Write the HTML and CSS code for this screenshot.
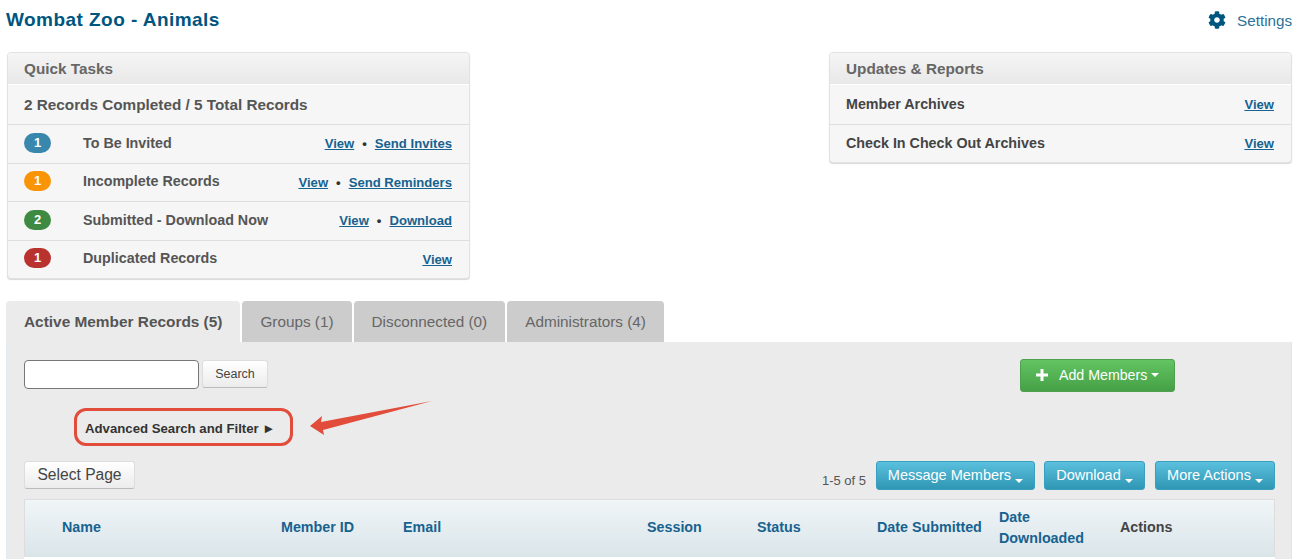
FILE: index.html
```html
<!DOCTYPE html>
<html lang="en">
  <head>
    <title>Wombat Zoo - Animals</title>
    <link rel="stylesheet" href="styles.css">
  </head>
  <body>
    <div class="page-top">
      <h1 class="title">Wombat Zoo - Animals</h1>
      <a class="settings" href="#">
        <svg class="gear" viewBox="0 0 512 512"><path d="M487.4 315.7l-42.6-24.6c4.3-23.2 4.3-47 0-70.2l42.6-24.6c4.9-2.8 7.1-8.6 5.5-14-11.1-35.6-30-67.8-54.7-94.6-3.8-4.1-10-5.1-14.8-2.3L380.8 110c-17.9-15.4-38.5-27.3-60.8-35.1V25.8c0-5.6-3.9-10.5-9.4-11.7-36.7-8.2-74.3-7.8-109.2 0-5.5 1.2-9.4 6.1-9.4 11.7V75c-22.2 7.9-42.8 19.8-60.8 35.1L88.7 85.5c-4.9-2.8-11-1.9-14.8 2.3-24.7 26.7-43.6 58.9-54.7 94.6-1.7 5.4.6 11.2 5.5 14L67.3 221c-4.3 23.2-4.3 47 0 70.2l-42.6 24.6c-4.9 2.8-7.1 8.6-5.5 14 11.1 35.6 30 67.8 54.7 94.6 3.8 4.1 10 5.1 14.8 2.3l42.6-24.6c17.9 15.4 38.5 27.3 60.8 35.1v49.2c0 5.6 3.9 10.5 9.4 11.7 36.7 8.2 74.3 7.8 109.2 0 5.5-1.2 9.4-6.1 9.4-11.7v-49.2c22.2-7.9 42.8-19.8 60.8-35.1l42.6 24.6c4.9 2.8 11 1.9 14.8-2.3 24.7-26.7 43.6-58.9 54.7-94.6 1.5-5.5-.7-11.3-5.6-14.1zM256 336c-44.1 0-80-35.9-80-80s35.9-80 80-80 80 35.9 80 80-35.9 80-80 80z"/></svg>
        Settings
      </a>
    </div>

    <div class="panels">
      <section class="panel">
        <h2 class="panel-head">Quick Tasks</h2>
        <div class="row row-summary">2 Records Completed / 5 Total Records</div>
        <div class="row">
          <span class="badge badge-blue">1</span>
          <span class="row-label">To Be Invited</span>
          <span class="row-links"><a href="#">View</a><i>•</i><a href="#">Send Invites</a></span>
        </div>
        <div class="row">
          <span class="badge badge-orange">1</span>
          <span class="row-label">Incomplete Records</span>
          <span class="row-links"><a href="#">View</a><i>•</i><a href="#">Send Reminders</a></span>
        </div>
        <div class="row">
          <span class="badge badge-green">2</span>
          <span class="row-label">Submitted - Download Now</span>
          <span class="row-links"><a href="#">View</a><i>•</i><a href="#">Download</a></span>
        </div>
        <div class="row">
          <span class="badge badge-red">1</span>
          <span class="row-label">Duplicated Records</span>
          <span class="row-links"><a href="#">View</a></span>
        </div>
      </section>

      <section class="panel">
        <h2 class="panel-head">Updates &amp; Reports</h2>
        <div class="row row-strong">
          <span class="row-label">Member Archives</span>
          <span class="row-links"><a href="#">View</a></span>
        </div>
        <div class="row row-strong">
          <span class="row-label">Check In Check Out Archives</span>
          <span class="row-links"><a href="#">View</a></span>
        </div>
      </section>
    </div>

    <div class="tabs">
      <a class="tab tab-active" href="#">Active Member Records (5)</a>
      <a class="tab" href="#">Groups (1)</a>
      <a class="tab" href="#">Disconnected (0)</a>
      <a class="tab" href="#">Administrators (4)</a>
    </div>

    <div class="tab-body">
      <div class="search-row">
        <input class="search-input" type="text">
        <button class="btn btn-small">Search</button>
        <button class="btn-add">
          <svg class="plus" viewBox="0 0 12 12"><path d="M4.5 0h3v4.500h4.500v3h-4.500v4.500h-3v-4.500h-4.500v-3h4.500z"/></svg>
          Add Members <b class="caret"></b>
        </button>
      </div>

      <div class="advanced-row">
        <a class="advanced" href="#">Advanced Search and Filter ►</a>
        <svg class="arrow" width="130" height="40" viewBox="0 0 130 40"><path d="M3 26L15 16L14 22L125 1L16 30L17 35z"/></svg>
      </div>

      <div class="action-row">
        <button class="btn btn-select">Select Page</button>
        <span class="pager">1-5 of 5</span>
        <button class="btn-blue btn-message">Message Members <b class="caret"></b></button>
        <button class="btn-blue btn-download">Download <b class="caret"></b></button>
        <button class="btn-blue btn-more">More Actions <b class="caret"></b></button>
      </div>

      <div class="table-head">
        <span>Name</span>
        <span>Member ID</span>
        <span>Email</span>
        <span>Session</span>
        <span>Status</span>
        <span>Date Submitted</span>
        <span>Date<br>Downloaded</span>
        <span class="col-actions">Actions</span>
      </div>
      <div class="table-rows"></div>
    </div>
  </body>
</html>
```

FILE: styles.css
```css
* {
  box-sizing: border-box;
}
html,
body {
  height: 559px;
  overflow: hidden;
}
body {
  margin: 0;
  background: #fff;
  font-family: "Liberation Sans", Arial, sans-serif;
  font-size: 14.3px;
  color: #444;
}
a {
  color: #17628f;
}

.page-top {
  display: flex;
  justify-content: space-between;
  align-items: center;
  height: 40px;
  padding: 0 6px;
}
.title {
  margin: 0;
  font-size: 19px;
  font-weight: bold;
  letter-spacing: 0.45px;
  color: #00557f;
}
.settings {
  display: flex;
  align-items: center;
  gap: 11px;
  font-size: 15.2px;
  color: #2b7199;
  text-decoration: none;
}
.gear {
  width: 18px;
  height: 18px;
  fill: #00557f;
}

.panels {
  display: flex;
  justify-content: space-between;
  align-items: flex-start;
  margin-top: 12px;
  padding: 0 6px 0 7px;
  height: 227px;
}
.panel {
  width: 463px;
  background: #f6f6f6;
  border: 1px solid #e2e2e2;
  border-radius: 4px;
  box-shadow: 0 1px 1px #d8d8d8;
  overflow: hidden;
}
.panel-head {
  display: flex;
  align-items: center;
  height: 32px;
  margin: 0;
  padding-left: 16px;
  background: linear-gradient(#f5f5f5, #e8e8e8);
  border-bottom: 1px solid #fff;
  font-size: 15.3px;
  font-weight: bold;
  color: #666;
}
.row {
  display: flex;
  align-items: center;
  height: 38.500px;
  padding: 0 17px 0 16px;
  border-top: 1px solid #dedede;
  font-weight: bold;
  color: #555;
}
.panel-head + .row {
  border-top: 0;
}
.row-summary {
  height: 39px;
  font-size: 15.3px;
}
.row-strong {
  color: #444;
}
.badge {
  flex: none;
  width: 27px;
  height: 20px;
  margin-right: 32px;
  margin-bottom: 2px;
  border-radius: 10px;
  font-size: 13px;
  line-height: 20px;
  text-align: center;
  color: #fff;
}
.badge + .row-label {
  margin-bottom: 2px;
}
.badge-blue {
  background: #3a87ad;
}
.badge-orange {
  background: #f89406;
}
.badge-green {
  background: #3f8a43;
}
.badge-red {
  background: #b9322e;
}
.row-label {
  font-weight: bold;
}
.row-links {
  margin-left: auto;
  font-size: 13.1px;
  white-space: nowrap;
}
.row-links i {
  margin: 0 8px;
  font-style: normal;
  color: #333;
}

.tabs {
  display: flex;
  gap: 2px;
  height: 41px;
  margin-top: 22px;
  padding-left: 6px;
}
.tab {
  display: flex;
  align-items: center;
  padding: 0 18px;
  background: #ccc;
  border-radius: 4px 4px 0 0;
  font-size: 15.3px;
  color: #666;
  text-decoration: none;
}
.tab-active {
  background: #ebebeb;
  font-size: 15.4px;
  font-weight: bold;
  color: #555;
}

.tab-body {
  height: 217px;
  margin: 0 6px;
  padding: 17px 16px 0 17px;
  background: #ebebeb;
  border-left: 1px solid #e0ecf2;
  border-right: 1px solid #dbe8ee;
}
.search-row {
  display: flex;
  align-items: flex-start;
  height: 33px;
}
.search-input {
  width: 175px;
  height: 29px;
  margin: 1px 3px 0 0;
  background: #fff;
  border: 1px solid #777;
  border-radius: 4px;
}
.btn {
  background: linear-gradient(#fff, #ececec);
  border: 1px solid #ddd;
  border-bottom-color: #bbb;
  border-radius: 3px;
  font-family: inherit;
  color: #444;
}
.btn-small {
  width: 66px;
  height: 28px;
  margin-top: 1px;
  font-size: 12.500px;
}
.btn-add {
  display: flex;
  align-items: center;
  width: 155px;
  height: 33px;
  margin-left: auto;
  margin-right: 100px;
  padding: 0 0 2px 15px;
  background: linear-gradient(#62c462, #46a046);
  border: 1px solid #4f9f4f;
  border-radius: 3px;
  font-family: inherit;
  font-size: 14.200px;
  color: #fff;
}
.plus {
  width: 12px;
  height: 12px;
  margin-right: 11px;
  fill: #fff;
}
.caret {
  display: inline-block;
  margin-left: 4px;
  border-top: 4px solid #fff;
  border-left: 4px solid transparent;
  border-right: 4px solid transparent;
  vertical-align: middle;
}

.advanced-row {
  position: relative;
  height: 69px;
  padding: 16px 0 0 50px;
}
.advanced {
  display: flex;
  align-items: center;
  width: 219px;
  height: 38px;
  padding: 2px 0 0 8px;
  border: 3px solid #e14d3a;
  border-radius: 12px;
  font-size: 13.200px;
  font-weight: bold;
  color: #333;
  text-decoration: none;
}
.arrow {
  position: absolute;
  left: 283px;
  top: 8px;
  fill: #e14d3a;
}

.action-row {
  display: flex;
  align-items: flex-start;
  height: 38px;
}
.btn-select {
  width: 111px;
  height: 28px;
  font-size: 15.6px;
}
.pager {
  margin: 12px 10px 0 auto;
  font-size: 13px;
  color: #555;
}
.btn-blue {
  height: 29px;
  padding: 0 0 2px;
  background: linear-gradient(#5bc0de, #2f96b4);
  border: 1px solid #3a9fbf;
  border-radius: 3px;
  font-family: inherit;
  font-size: 14.500px;
  color: #fff;
}
.btn-blue .caret {
  margin-left: 0;
  vertical-align: -3px;
}
.btn-message {
  width: 159px;
}
.btn-download {
  width: 101px;
  margin-left: 9px;
}
.btn-more {
  width: 120px;
  margin-left: 10px;
}

.table-head {
  display: grid;
  grid-template-columns: 219px 122px 244px 110px 120px 122px 121px 1fr;
  align-items: center;
  height: 58px;
  padding: 0 0 2px 37px;
  background: linear-gradient(#f0f5f7, #dae5ea);
  border: 1px solid #ddd;
  border-bottom: 0;
  font-weight: bold;
  line-height: 21px;
  color: #17628f;
}
.col-actions {
  color: #444;
}
.table-rows {
  height: 2px;
  background: #fff;
}
```
